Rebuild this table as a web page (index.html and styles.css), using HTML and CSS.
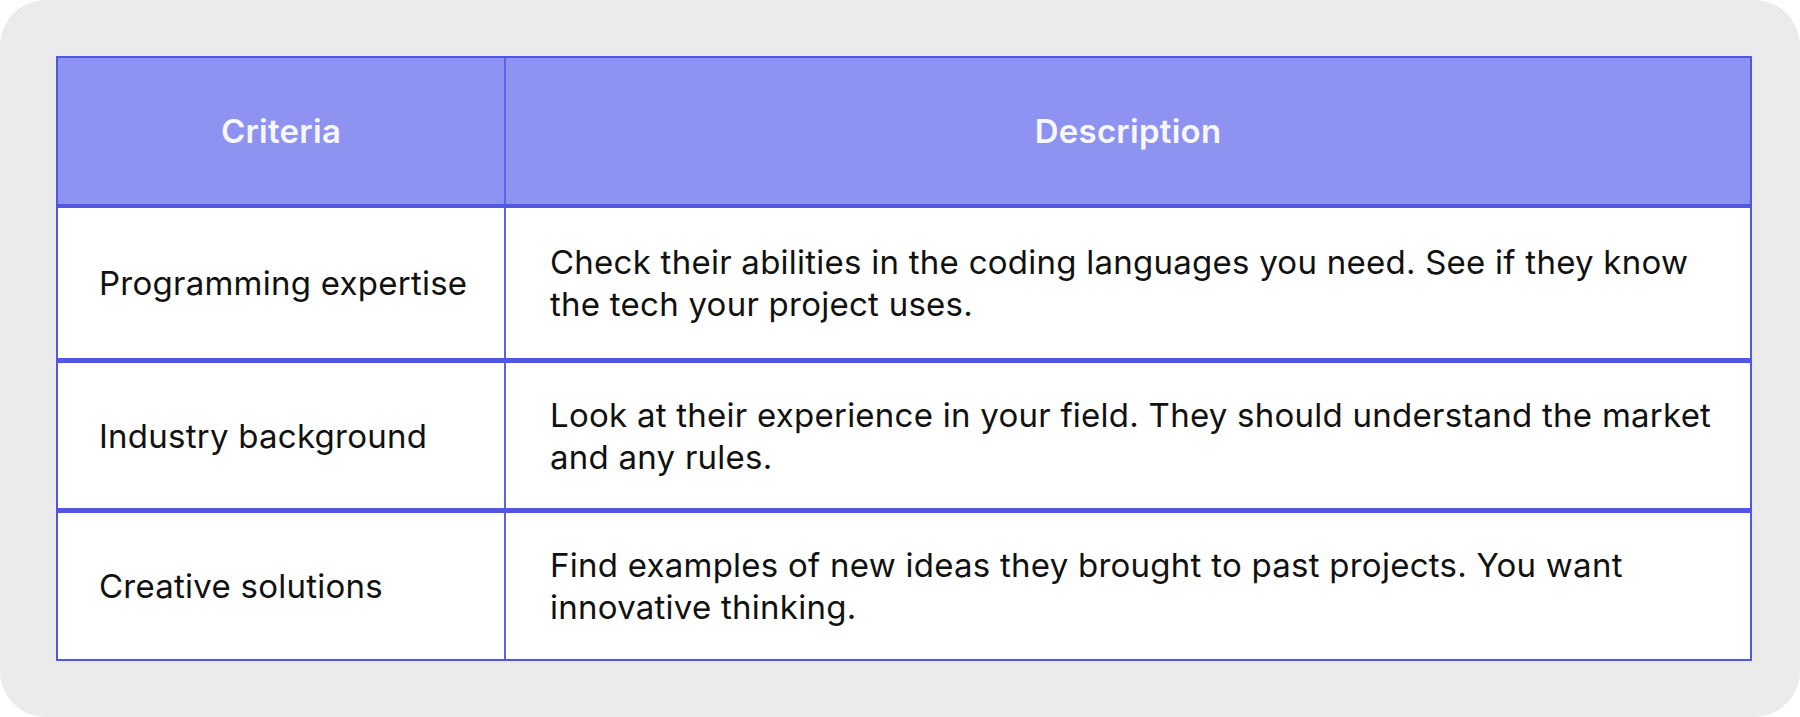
FILE: index.html
```html
<!DOCTYPE html>
<html lang="en">
<head>
<meta charset="utf-8">
<title>Criteria table</title>
<link rel="stylesheet" href="styles.css">
</head>
<body>
<div class="card">
  <div class="table">
    <div class="row head">
      <div class="cell c1">Criteria</div>
      <div class="cell c2">Description</div>
    </div>
    <div class="row r1">
      <div class="cell c1">Programming expertise</div>
      <div class="cell c2">Check their abilities in the coding languages you need. See if they know the tech your project uses.</div>
    </div>
    <div class="row r2">
      <div class="cell c1">Industry background</div>
      <div class="cell c2">Look at their experience in your field. They should understand the market and any rules.</div>
    </div>
    <div class="row last">
      <div class="cell c1">Creative solutions</div>
      <div class="cell c2">Find examples of new ideas they brought to past projects. You want innovative thinking.</div>
    </div>
  </div>
</div>
</body>
</html>
```

FILE: styles.css
```css
html, body {
  margin: 0;
  padding: 0;
  background: #ffffff;
}
body {
  font-family: Inter, "Noto Sans", "Liberation Sans", sans-serif;
  color: #111111;
}
.card {
  width: 1800px;
  height: 717px;
  box-sizing: border-box;
  background: #ebebec;
  border-radius: 46px;
  padding: 56px 48px 0 56px;
}
.table {
  display: flex;
  flex-direction: column;
}
.row {
  display: grid;
  grid-template-columns: 448px 1fr;
  height: 152px;
  box-sizing: border-box;
  background: #ffffff;
  border-left: 2px solid #5057e4;
  border-right: 2px solid #5057e4;
  border-bottom: 5px solid #5057e4;
}
.row.head {
  background: #8e92f0;
  border-top: 2px solid #5057e4;
  border-bottom: 4px solid #5057e4;
}
.row.r1 {
  height: 155px;
}
.row.r2 {
  height: 150px;
}
.row.last {
  height: 148px;
  border-bottom: 2px solid #5057e4;
}
.cell {
  display: flex;
  align-items: center;
  font-size: 33px;
  line-height: 42px;
  letter-spacing: 0.25px;
}
.c1 {
  padding: 0 16px 0 41px;
  border-right: 2px solid #5d63e6;
}
.c2 {
  padding: 0 28px 0 44px;
}
.head .cell {
  justify-content: center;
  padding: 0;
  font-weight: 600;
  color: #f7f7ff;
}
```
